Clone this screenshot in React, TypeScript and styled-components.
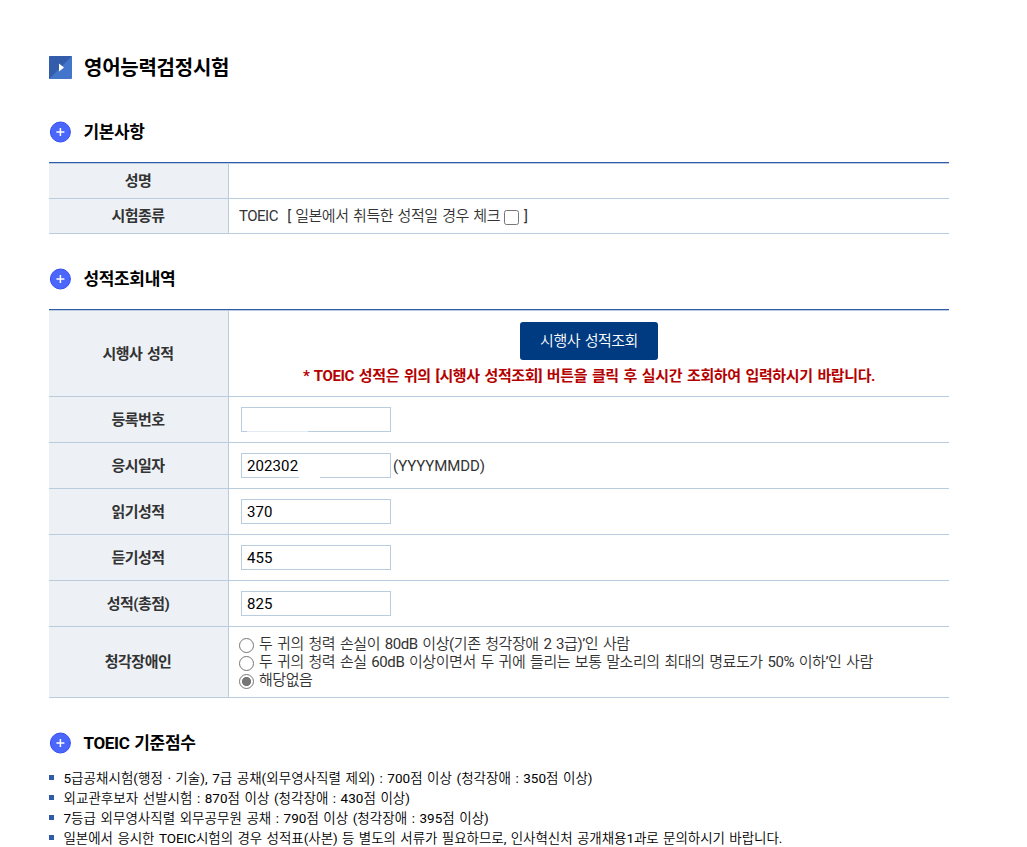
import styled, { createGlobalStyle, css } from "styled-components";

const LINE = "#bacddf";
const BLUE = "#2f5ba9";

const TEXT_FONT = `Roboto, "Noto Sans CJK KR DemiLight", "Noto Sans CJK KR", sans-serif`;
const BOLD_FONT = `Roboto, "Noto Sans CJK KR", sans-serif`;

const GlobalStyle = createGlobalStyle`
	* {
		box-sizing: border-box;
	}

	body {
		margin: 0;
		overflow: hidden;
		background-color: #fff;
		color: #333;
		font-family: ${TEXT_FONT};
		font-size: 15px;
		font-weight: 400;
		line-height: 18px;
		letter-spacing: -0.5px;
		word-spacing: 1.4px;
	}
`;

const Page = styled.main`
	width: 949px;
	height: 847px;
	padding: 50px 0 0 49px;
	overflow: hidden;
	white-space: nowrap;
`;

const PageTitle = styled.h1`
	height: 35px;
	display: flex;
	align-items: center;
	gap: 12px;
	margin: 0;
	color: #000;
	font-family: ${BOLD_FONT};
	font-size: 20px;
	font-weight: 700;
	letter-spacing: -0.25px;
`;

const SectionTitle = styled.h2<{ $top: number }>`
	height: 24px;
	display: flex;
	align-items: center;
	gap: 12.5px;
	margin: ${({ $top }) => $top}px 0 0;
	color: #000;
	font-family: ${BOLD_FONT};
	font-size: 17px;
	font-weight: 700;
	letter-spacing: -0.35px;
	word-spacing: 1px;
`;

const Table = styled.div`
	margin-top: 18px;
	border-top: 1px solid ${BLUE};
`;

const Row = styled.div<{ $height: number }>`
	height: ${({ $height }) => $height}px;
	display: flex;
	border-bottom: 1px solid ${LINE};

	&:first-child {
		border-top: 1px solid ${LINE};
	}
`;

const Label = styled.div`
	width: 180px;
	display: flex;
	align-items: center;
	justify-content: center;
	padding-right: 1px;
	background-color: #edf1f6;
	border-right: 1px solid ${LINE};
	font-family: ${BOLD_FONT};
	font-weight: 700;
`;

const Cell = styled.div<{ $column?: boolean }>`
	flex: 1;
	display: flex;
	align-items: center;
	padding: 0 10px;

	${({ $column }) =>
		$column &&
		css`
			flex-direction: column;
			padding-top: 11px;
		`}
`;

const Field = styled.span<{ $fade?: [number, number, number] }>`
	position: relative;
	display: flex;
	margin: 0 2px;

	${({ $fade }) =>
		$fade &&
		css`
			&::after {
				content: "";
				position: absolute;
				left: ${$fade[0]}px;
				bottom: 0;
				width: ${$fade[1]}px;
				height: 1px;
				background-color: rgba(255, 255, 255, ${$fade[2]});
			}
		`}
`;

const TextInput = styled.input`
	width: 150px;
	height: 25px;
	padding: 0 5px;
	border: 1px solid ${LINE};
	outline: none;
	background-color: #fff;
	color: #000;
	font-family: inherit;
	font-size: 15px;
	letter-spacing: 0.1px;
`;

const Format = styled.span`
	letter-spacing: -0.1px;
`;

const SearchButton = styled.button`
	width: 138px;
	height: 38px;
	flex: none;
	padding: 0 0 3px;
	border: none;
	border-radius: 3px;
	background-color: #003a80;
	color: #fff;
	font-family: inherit;
	font-size: 15px;
	letter-spacing: -0.5px;
	word-spacing: 1.5px;
`;

const Notice = styled.p`
	margin: 7px 0 0;
	color: #b50000;
	font-family: ${BOLD_FONT};
	font-weight: 700;
	letter-spacing: -0.38px;
	word-spacing: 1.5px;
`;

const CheckBox = styled.input`
	appearance: none;
	width: 15px;
	height: 15px;
	margin: 2px 5px 0 4px;
	border: 1px solid #767676;
	border-radius: 2.5px;
`;

const Options = styled.div`
	display: flex;
	flex-direction: column;
`;

const Option = styled.label`
	height: 18px;
	display: flex;
	align-items: center;
	letter-spacing: -0.43px;
`;

const Radio = styled.input`
	appearance: none;
	width: 15px;
	height: 15px;
	flex: none;
	margin: 2px 5px 0 0;
	border: 1px solid #767676;
	border-radius: 50%;

	&:checked {
		background: radial-gradient(circle, #767676 4.2px, #fff 5px);
	}
`;

const Rules = styled.ul`
	margin: 13px 0 0;
	padding: 0;
	list-style: none;
`;

const Rule = styled.li<{ $spacing?: number }>`
	height: 20px;
	display: flex;
	align-items: center;
	gap: 9.5px;
	color: #000;
	font-size: 13.5px;
	letter-spacing: ${({ $spacing }) => $spacing ?? 0.03}px;
	word-spacing: 1.1px;

	&::before {
		content: "";
		width: 5px;
		height: 5px;
		margin-bottom: 2px;
		background-color: ${BLUE};
	}
`;

function ArrowIcon() {
	return (
		<svg width="23" height="23" viewBox="0 0 23 23">
			<rect width="23" height="23" rx="1" fill="#4376ca" />
			<path d="M1 0H23L0 23V1Z" fill="#335cab" />
			<path d="M10 7.5L15 11.5L10 15.5Z" fill="#fff" />
		</svg>
	);
}

function PlusIcon() {
	return (
		<svg width="22" height="22" viewBox="0 0 22 22">
			<circle cx="11.4" cy="11" r="10" fill="#4b66fb" stroke="#344df3" />
			<path d="M11.4 7V15M7.4 11H15.4" stroke="#fff" strokeWidth="1.5" />
		</svg>
	);
}

const scores = [
	{ label: "읽기성적", value: "370" },
	{ label: "듣기성적", value: "455" },
	{ label: "성적(총점)", value: "825" },
];

export default function App() {
	return (
		<Page>
			<GlobalStyle />
			<PageTitle>
				<ArrowIcon />
				영어능력검정시험
			</PageTitle>

			<SectionTitle $top={35}>
				<PlusIcon />
				기본사항
			</SectionTitle>
			<Table>
				<Row $height={36}>
					<Label>성명</Label>
					<Cell />
				</Row>
				<Row $height={35}>
					<Label>시험종류</Label>
					<Cell>
						TOEIC&nbsp; [ 일본에서 취득한 성적일 경우 체크
						<CheckBox type="checkbox" />]
					</Cell>
				</Row>
			</Table>

			<SectionTitle $top={33}>
				<PlusIcon />
				성적조회내역
			</SectionTitle>
			<Table>
				<Row $height={87}>
					<Label>시행사 성적</Label>
					<Cell $column>
						<SearchButton type="button">시행사 성적조회</SearchButton>
						<Notice>* TOEIC 성적은 위의 [시행사 성적조회] 버튼을 클릭 후 실시간 조회하여 입력하시기 바랍니다.</Notice>
					</Cell>
				</Row>
				<Row $height={46}>
					<Label>등록번호</Label>
					<Cell>
						<Field $fade={[6, 61, 0.6]}>
							<TextInput type="text" />
						</Field>
					</Cell>
				</Row>
				<Row $height={46}>
					<Label>응시일자</Label>
					<Cell>
						<Field $fade={[58, 21, 1]}>
							<TextInput type="text" defaultValue="202302" />
						</Field>
						<Format>(YYYYMMDD)</Format>
					</Cell>
				</Row>
				{scores.map(({ label, value }) => (
					<Row key={label} $height={46}>
						<Label>{label}</Label>
						<Cell>
							<Field>
								<TextInput type="text" defaultValue={value} />
							</Field>
						</Cell>
					</Row>
				))}
				<Row $height={71}>
					<Label>청각장애인</Label>
					<Cell>
						<Options>
							<Option>
								<Radio type="radio" name="hearing" />두 귀의 청력 손실이 80dB 이상(기존 청각장애 2 3급)’인 사람
							</Option>
							<Option>
								<Radio type="radio" name="hearing" />두 귀의 청력 손실 60dB 이상이면서 두 귀에 들리는 보통 말소리의 최대의 명료도가 50% 이하’인 사람
							</Option>
							<Option>
								<Radio type="radio" name="hearing" defaultChecked />
								해당없음
							</Option>
						</Options>
					</Cell>
				</Row>
			</Table>

			<SectionTitle $top={33}>
				<PlusIcon />
				TOEIC 기준점수
			</SectionTitle>
			<Rules>
				<Rule>5급공채시험(행정ㆍ기술), 7급 공채(외무영사직렬 제외) : 700점 이상 (청각장애 : 350점 이상)</Rule>
				<Rule>외교관후보자 선발시험 : 870점 이상 (청각장애 : 430점 이상)</Rule>
				<Rule>7등급 외무영사직렬 외무공무원 공채 : 790점 이상 (청각장애 : 395점 이상)</Rule>
				<Rule $spacing={-0.05}>일본에서 응시한 TOEIC시험의 경우 성적표(사본) 등 별도의 서류가 필요하므로, 인사혁신처 공개채용1과로 문의하시기 바랍니다.</Rule>
			</Rules>
		</Page>
	);
}
